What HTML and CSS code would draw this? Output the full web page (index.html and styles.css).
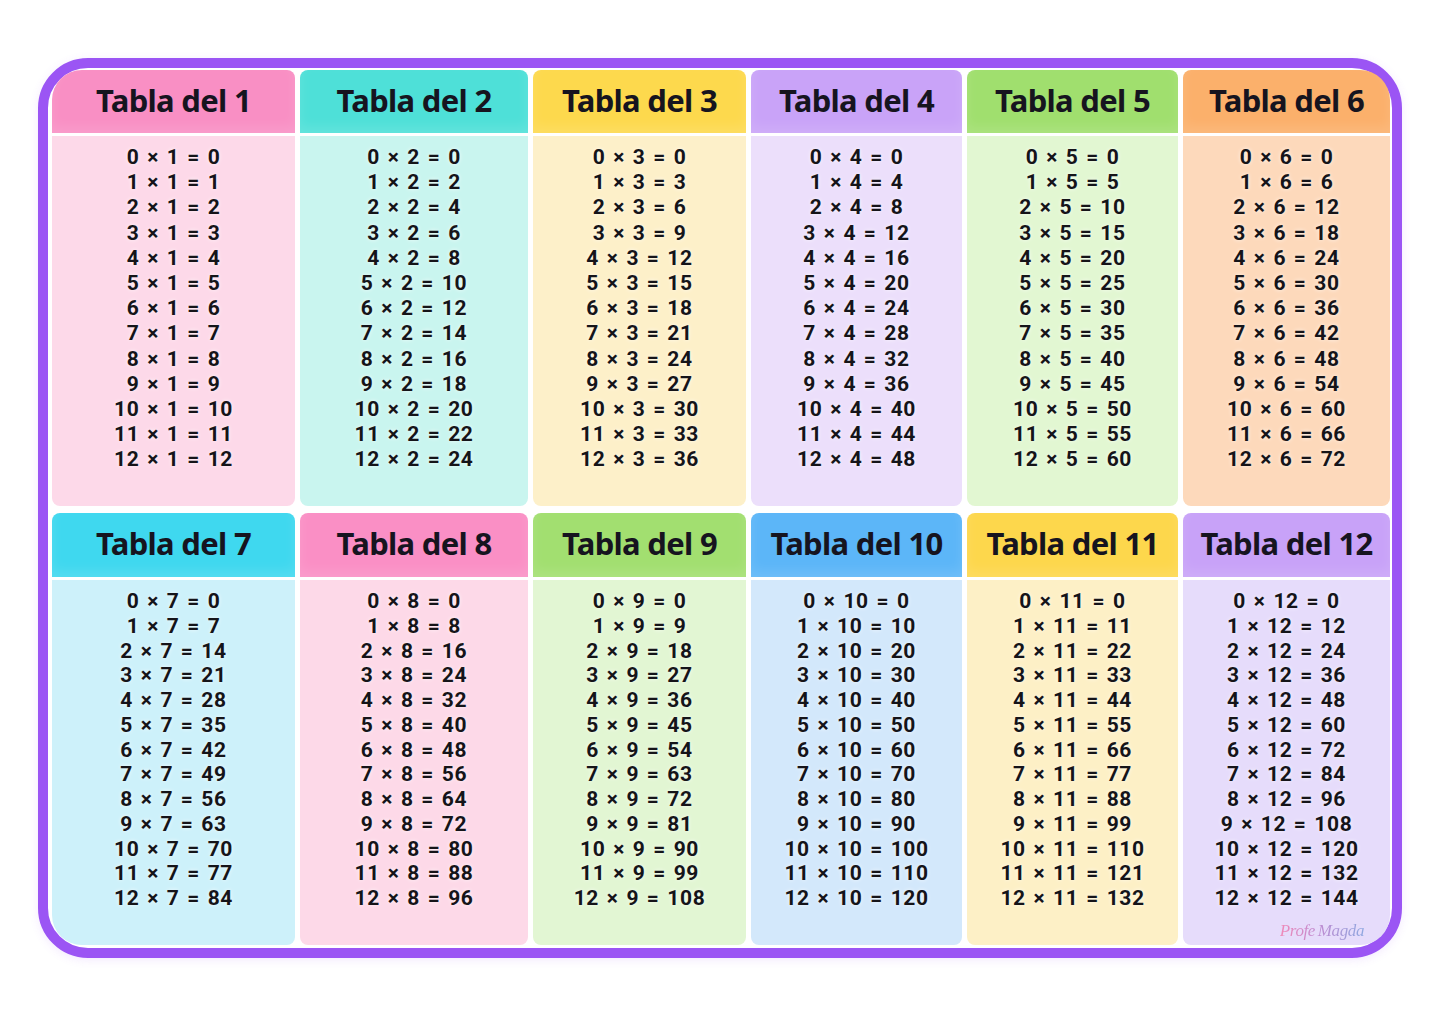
FILE: index.html
```html
<!DOCTYPE html>
<html lang="es">
<head>
<meta charset="utf-8">
<title>Tablas de multiplicar</title>
<link rel="stylesheet" href="styles.css">
</head>
<body>
<div class="frame">
  <div class="grid">
    <section class="card c1 top-left"><div class="head">Tabla del 1</div><div class="body" data-n="1"></div></section>
    <section class="card c2"><div class="head">Tabla del 2</div><div class="body" data-n="2"></div></section>
    <section class="card c3"><div class="head">Tabla del 3</div><div class="body" data-n="3"></div></section>
    <section class="card c4"><div class="head">Tabla del 4</div><div class="body" data-n="4"></div></section>
    <section class="card c5"><div class="head">Tabla del 5</div><div class="body" data-n="5"></div></section>
    <section class="card c6 top-right"><div class="head">Tabla del 6</div><div class="body" data-n="6"></div></section>
    <section class="card c7 bottom-left row2"><div class="head">Tabla del 7</div><div class="body" data-n="7"></div></section>
    <section class="card c8 row2"><div class="head">Tabla del 8</div><div class="body" data-n="8"></div></section>
    <section class="card c9 row2"><div class="head">Tabla del 9</div><div class="body" data-n="9"></div></section>
    <section class="card c10 row2"><div class="head">Tabla del 10</div><div class="body" data-n="10"></div></section>
    <section class="card c11 row2"><div class="head">Tabla del 11</div><div class="body" data-n="11"></div></section>
    <section class="card c12 bottom-right row2"><div class="head">Tabla del 12</div><div class="body" data-n="12"><span class="sign">Profe Magda</span></div></section>
  </div>
</div>
<script src="script.js"></script>
</body>
</html>
```

FILE: styles.css
```css
html, body {
  margin: 0;
  padding: 0;
  background: #ffffff;
}

body {
  width: 1440px;
  height: 1018px;
  overflow: hidden;
  font-family: "Noto Sans", "DejaVu Sans", sans-serif;
}

.frame {
  box-sizing: border-box;
  margin: 58px 0 0 38px;
  width: 1364px;
  height: 900px;
  border: 10px solid #9b55f4;
  border-radius: 50px;
  padding: 2px 2px 3px 4px;
  background: #ffffff;
  box-shadow: 0 2px 10px rgba(155, 85, 244, 0.12);
}

.grid {
  display: grid;
  height: 100%;
  grid-template-columns: 243px 228px 213px 211px 211px 207px;
  grid-template-rows: 436px 432px;
  column-gap: 5px;
  row-gap: 7px;
}

.card {
  display: flex;
  flex-direction: column;
  gap: 3px;
  min-width: 0;
}

.head {
  box-sizing: border-box;
  height: 63px;
  flex: none;
  display: flex;
  align-items: center;
  justify-content: center;
  padding-bottom: 4px;
  border-radius: 8px 8px 0 0;
  font-family: "Noto Sans", sans-serif;
  font-weight: 700;
  font-size: 31px;
  letter-spacing: -0.7px;
  color: #16141f;
  box-shadow: inset 0 -6px 12px rgba(255, 255, 255, 0.12);
}

.row2 .head {
  height: 64px;
}

.body {
  position: relative;
  flex: 1;
  border-radius: 0 0 8px 8px;
  padding-top: 9px;
  font-family: Roboto, "Liberation Sans", sans-serif;
  font-weight: 700;
  font-size: 21px;
  line-height: 25.2px;
  letter-spacing: 0.6px;
  word-spacing: 2px;
  color: #151419;
  text-align: center;
  text-shadow: 0 0 4px rgba(255, 255, 255, 0.8);
}

.row2 .body {
  line-height: 24.75px;
}

.line {
  white-space: nowrap;
}

.top-left .head { border-top-left-radius: 30px; }
.top-right .head { border-top-right-radius: 30px; }
.bottom-left .body { border-bottom-left-radius: 30px; }
.bottom-right .body { border-bottom-right-radius: 30px; }

.c1 .head { background: #f98fc4; }
.c1 .body { background: #fdd9e9; }
.c2 .head { background: #4ee0d8; }
.c2 .body { background: #c9f5ef; }
.c3 .head { background: #fdd94d; }
.c3 .body { background: #fdf0c9; }
.c4 .head { background: #c9a3f8; }
.c4 .body { background: #ecdffb; }
.c5 .head { background: #a0df6e; }
.c5 .body { background: #e2f7d2; }
.c6 .head { background: #fbb06b; }
.c6 .body { background: #fdd9bb; }
.c7 .head { background: #3fd8ef; }
.c7 .body { background: #cdf1fa; }
.c8 .head { background: #fa8fc5; }
.c8 .body { background: #fdd9e8; }
.c9 .head { background: #a2df70; }
.c9 .body { background: #e2f6d3; }
.c10 .head { background: #5cb6f8; }
.c10 .body { background: #d3e8fb; }
.c11 .head { background: #fdd74c; }
.c11 .body { background: #fdf0c6; }
.c12 .head { background: #c8a2f8; }
.c12 .body { background: #e6dcfb; }

.sign {
  position: absolute;
  right: 26px;
  bottom: 4px;
  font-family: "Liberation Serif", serif;
  font-style: italic;
  font-weight: 400;
  font-size: 17px;
  line-height: 20px;
  letter-spacing: -0.4px;
  word-spacing: -1px;
  text-shadow: none;
  background: linear-gradient(90deg, #f08ab8, #c08ad0 45%, #8fa8e0);
  -webkit-background-clip: text;
  background-clip: text;
  color: transparent;
}
```

FILE: script.js
```js
document.querySelectorAll('.body[data-n]').forEach(function (body) {
  var n = parseInt(body.getAttribute('data-n'), 10);
  var frag = document.createDocumentFragment();
  for (var i = 0; i <= 12; i++) {
    var d = document.createElement('div');
    d.className = 'line';
    d.textContent = i + ' \u00d7 ' + n + ' = ' + (i * n);
    frag.appendChild(d);
  }
  body.insertBefore(frag, body.firstChild);
});
```
